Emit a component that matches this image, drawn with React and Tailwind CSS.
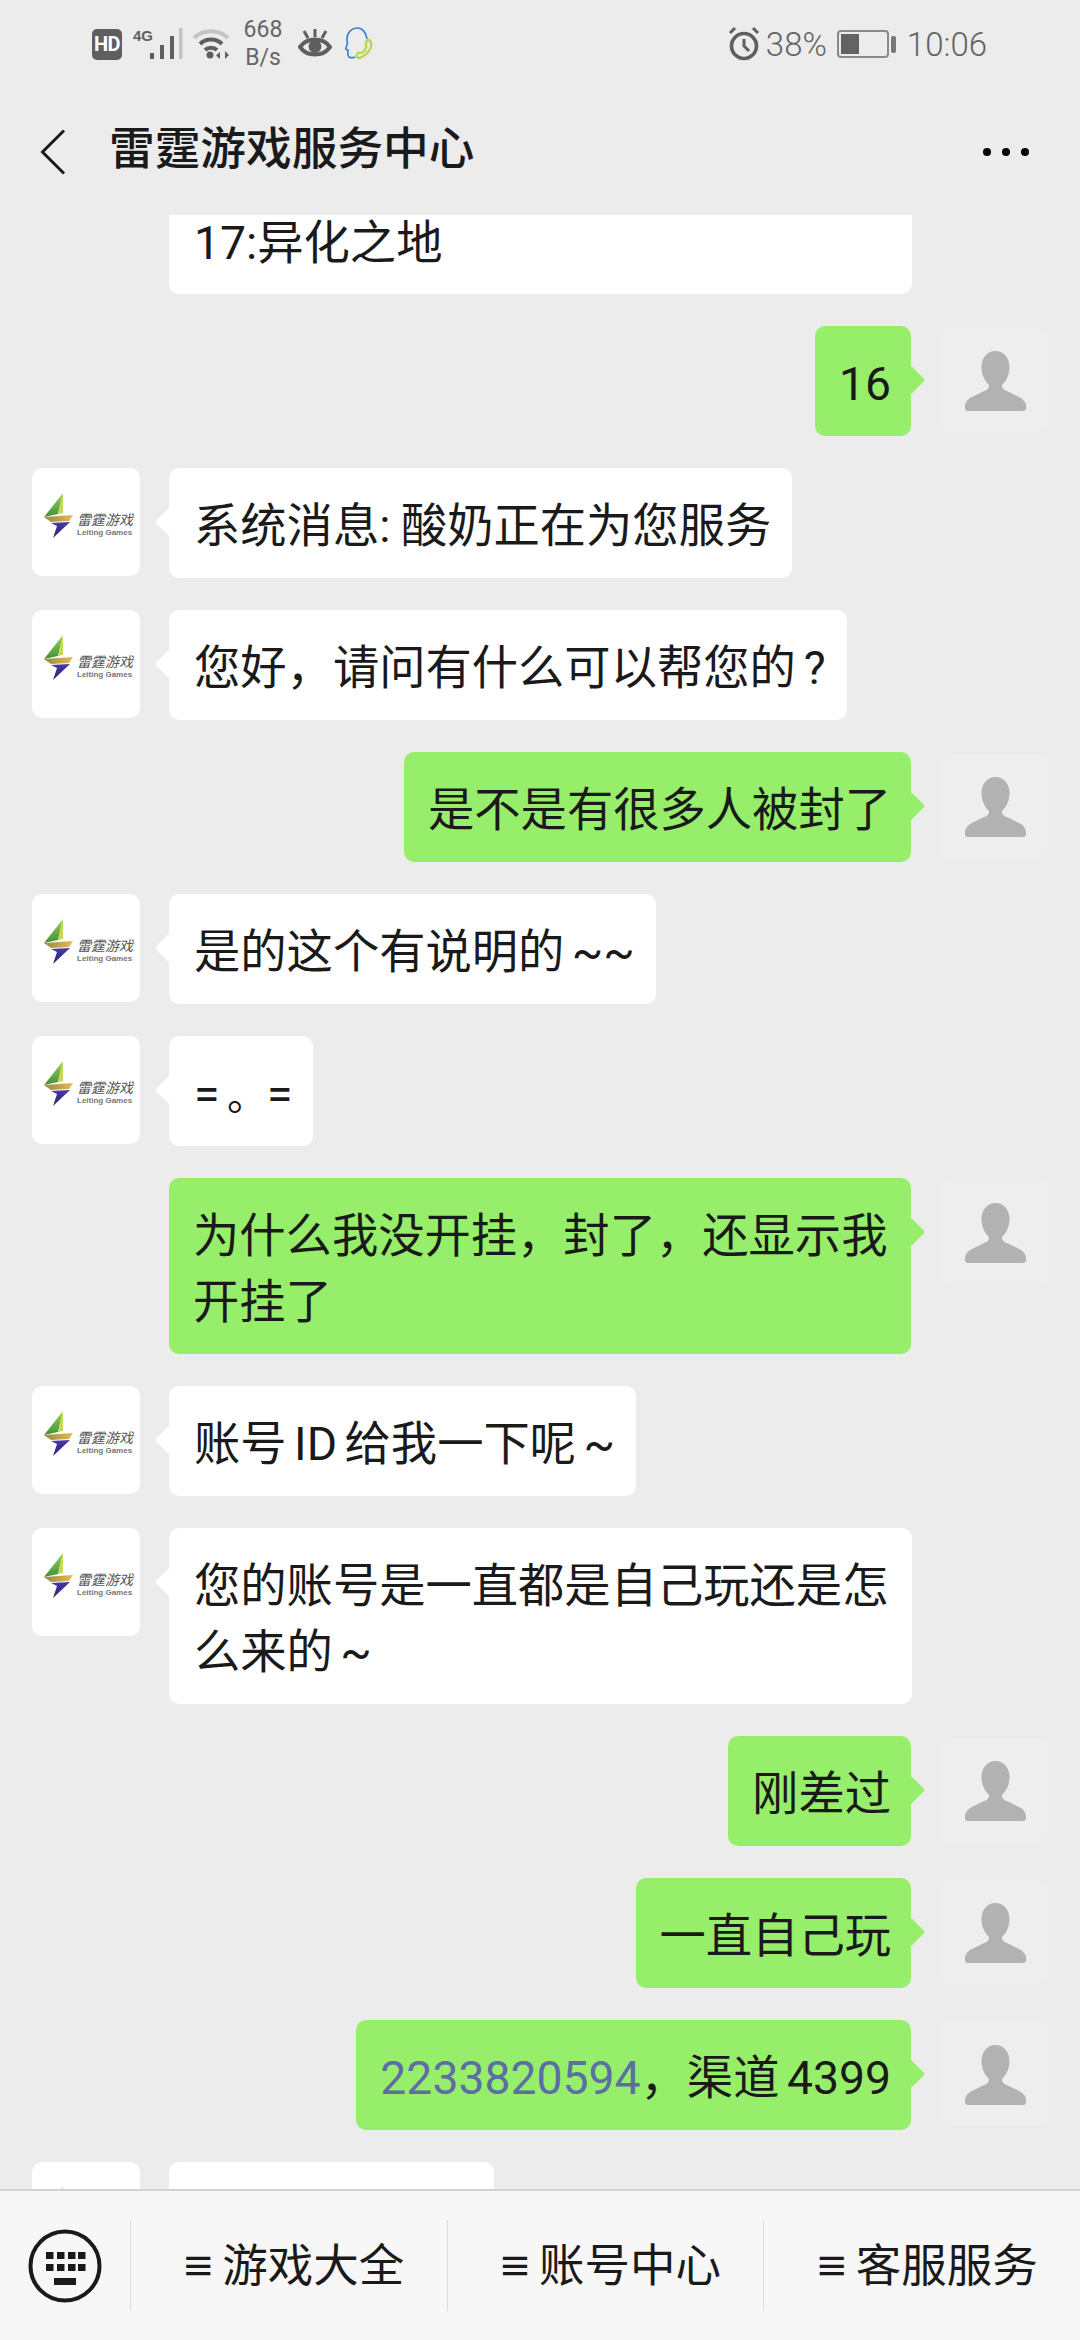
import React from 'react';

const LeitingLogo = ({ clipped }) => (
    <div className="relative w-[108px] h-[108px] shrink-0 rounded-[10px] bg-white overflow-hidden">
        <svg className="absolute left-0 top-0" width="46" height="80" viewBox="0 0 46 80">
            <defs>
                <linearGradient id="boltTop" x1="0" y1="0" x2="0" y2="1">
                    <stop offset="0" stopColor="#9ad64e" />
                    <stop offset="1" stopColor="#3f8f3c" />
                </linearGradient>
                <linearGradient id="boltMid" x1="0" y1="0" x2="1" y2="0">
                    <stop offset="0" stopColor="#8f8a48" />
                    <stop offset="1" stopColor="#efb850" />
                </linearGradient>
                <linearGradient id="boltLow" x1="0" y1="0" x2="0" y2="1">
                    <stop offset="0" stopColor="#4a37a8" />
                    <stop offset="1" stopColor="#262672" />
                </linearGradient>
            </defs>
            <path d="M31 25 L12 49 L26 46 Z" fill="url(#boltTop)" />
            <path d="M31 25 L26 46 L31 45 Z" fill="#c9d94f" />
            <path d="M12 49 L41 47 L37 53 L19 54 Z" fill="url(#boltMid)" />
            <path d="M19 55 L38 54 L21 70 L25 58 Z" fill="url(#boltLow)" />
        </svg>
        {!clipped && (
            <>
                <div className="absolute left-[45px] top-[43px] text-[14px] leading-[19px] italic text-[#555] whitespace-nowrap">
                    雷霆游戏
                </div>
                <div className="absolute left-[45px] top-[59px] text-[8px] leading-[11px] font-bold text-[#777] whitespace-nowrap font-['Liberation_Sans',sans-serif]">
                    Leiting Games
                </div>
            </>
        )}
    </div>
);

const UserAvatar = () => (
    <div className="w-[106px] h-[104px] mt-[2px] shrink-0 rounded-[8px] bg-[#eeeeee] flex items-center justify-center">
        <svg width="61" height="60" viewBox="0 0 61 60" className="mt-[2px]">
            <path
                d="M30.5 0C39 0 44.5 7 44.5 16C44.5 24 41 30 37 34C37 38 39 39 44 41L56 47C59 49 61 52 61 55L61 57Q61 60 58 60L3 60Q0 60 0 57L0 55C0 52 2 49 5 47L17 41C22 39 24 38 24 34C20 30 16.5 24 16.5 16C16.5 7 22 0 30.5 0Z"
                fill="#b2b2b2"
            />
        </svg>
    </div>
);

const Incoming = ({ children, width }) => (
    <div className="flex items-start gap-[29px] pl-[32px]">
        <LeitingLogo />
        <div className={`relative rounded-[10px] bg-white pl-[25px] pr-[21px] pt-[25px] pb-[19px] text-[46.3px] leading-[66px] [word-spacing:-4px] text-[#1a1a1a] ${width || ''}`}>
            <span className="absolute -left-[10px] top-[44px] w-[20px] h-[20px] rotate-45 rounded-[2px] bg-white" />
            <span className="relative">{children}</span>
        </div>
    </div>
);

const Outgoing = ({ children, width }) => (
    <div className="flex items-start justify-end gap-[31px] pr-[32px]">
        <div className={`relative rounded-[10px] bg-[#96ee6a] pl-[24px] pr-[20px] pt-[25px] pb-[19px] text-[46.3px] leading-[66px] [word-spacing:-4px] text-[#1a1a1a] ${width || ''}`}>
            <span className="absolute -right-[10px] top-[44px] w-[20px] h-[20px] rotate-45 rounded-[2px] bg-[#96ee6a]" />
            <span className="relative">{children}</span>
        </div>
        <UserAvatar />
    </div>
);

const StatusBar = () => (
    <div className="h-[88px] flex items-center justify-between pl-[92px] pr-[93px] text-[#636363]">
        <div className="flex items-center">
            <div className="w-[30px] h-[31px] rounded-[5px] bg-[#5f5f5f] text-white text-[20px] leading-[31px] font-bold text-center tracking-tight">
                HD
            </div>
            <div className="relative w-[50px] h-[32px] ml-[11px]">
                <span className="absolute left-0 top-0 text-[15px] leading-[15px] font-bold text-[#5f5f5f] font-['Liberation_Sans_Narrow','Liberation_Sans',sans-serif]">4G</span>
                <svg className="absolute left-0 top-0" width="50" height="32" viewBox="0 0 50 32">
                    <rect x="17" y="25" width="4" height="6" fill="#5f5f5f" />
                    <rect x="27" y="17" width="4" height="14" fill="#5f5f5f" />
                    <rect x="37" y="8" width="4" height="23" fill="#5f5f5f" />
                    <rect x="46" y="0" width="3.5" height="31" fill="#c4c4c4" />
                </svg>
            </div>
            <svg className="ml-[9px]" width="38" height="32" viewBox="0 0 38 32" fill="none">
                <path d="M2 10C11 1 27 1 36 10" stroke="#c4c4c4" strokeWidth="4" />
                <path d="M8 16C14 10 24 10 30 16" stroke="#5f5f5f" strokeWidth="4" />
                <path d="M13 22C16 19 22 19 25 22" stroke="#5f5f5f" strokeWidth="4" />
                <circle cx="18" cy="27" r="3.5" fill="#5f5f5f" />
                <path d="M28 24v7l-4-3.5zM33 23v8l4-4z" fill="#5f5f5f" />
            </svg>
            <div className="w-[40px] ml-[13px] text-center text-[23px] leading-[28px] text-[#666]">
                <div>668</div>
                <div>B/s</div>
            </div>
            <svg className="ml-[15px]" width="34" height="32" viewBox="0 0 34 32" fill="none">
                <path d="M2 19C9 9 25 9 32 19C25 29 9 29 2 19Z" stroke="#5f5f5f" strokeWidth="4" />
                <circle cx="17" cy="18.5" r="6.5" fill="#5f5f5f" />
                <path d="M17 1v8M6 3l4 7M28 3l-4 7" stroke="#5f5f5f" strokeWidth="3" />
            </svg>
            <svg className="ml-[13px]" width="29" height="34" viewBox="0 0 29 34" fill="none">
                <path d="M22 12C21 5 17 1 13 1C6 1 2 6 2 12C2 15 3 16 2 18L0.5 22L3 23C3 26 2 29 4 30C6 31 8 31 10 30" stroke="#2f7fd6" strokeWidth="1.6" />
                <path d="M24 13C27 15 27 20 24 24C21 28 16 31 13 31C11 30 11 28 13 26C15 25 17 27 18 25C20 23 22 20 21 18C20 16 22 13 24 13Z" stroke="#b9d84c" strokeWidth="2.4" />
            </svg>
        </div>
        <div className="flex items-center">
            <svg width="32" height="34" viewBox="0 0 32 34" fill="none">
                <circle cx="16" cy="19" r="12.5" stroke="#5f5f5f" strokeWidth="3.6" />
                <path d="M16 12v7l5 5" stroke="#5f5f5f" strokeWidth="3" />
                <path d="M2 6l5-5M30 6l-5-5" stroke="#5f5f5f" strokeWidth="3" />
            </svg>
            <span className="ml-[6px] text-[33px] leading-none font-light">38%</span>
            <div className="ml-[10px] w-[52px] h-[28px] rounded-[4px] border-2 border-[#8a8a8a] p-[2px]">
                <div className="w-[18px] h-full bg-[#636363]" />
            </div>
            <div className="ml-[2px] w-[5px] h-[17px] rounded-[2px] bg-[#777]" />
            <span className="ml-[11px] text-[33px] leading-none font-light">10:06</span>
        </div>
    </div>
);

const Header = () => (
    <div className="h-[127px] flex items-center justify-between pl-[40px] pr-[51px]">
        <div className="flex items-center">
            <svg width="26" height="46" viewBox="0 0 26 46" fill="none">
                <path d="M24 1.5L2.5 23L24 44.5" stroke="#1a1a1a" strokeWidth="3" />
            </svg>
            <span className="ml-[43px] -mt-[4px] text-[45.7px] leading-none font-medium text-[#1a1a1a]">雷霆游戏服务中心</span>
        </div>
        <div className="flex items-center gap-[11px]">
            <span className="w-[8px] h-[8px] rounded-full bg-black" />
            <span className="w-[8px] h-[8px] rounded-full bg-black" />
            <span className="w-[8px] h-[8px] rounded-full bg-black" />
        </div>
    </div>
);

const Keyboard = () => (
    <svg width="74" height="74" viewBox="0 0 74 74" fill="none">
        <circle cx="37" cy="37" r="34.5" stroke="#1a1a1a" strokeWidth="4" />
        {[18, 29, 40, 50].map((x) => (
            <g key={x} fill="#1a1a1a">
                <rect x={x} y="23" width="7.5" height="7" />
                <rect x={x} y="35" width="7.5" height="7" />
            </g>
        ))}
        <rect x="26" y="49" width="22" height="7" fill="#1a1a1a" />
    </svg>
);

const MenuItem = ({ label }) => (
    <div className="flex-1 h-[91px] border-l border-[#dcdcdc] flex items-center justify-center pl-[8px] pt-[3px] text-[45.5px] leading-none text-[#1a1a1a]">
        <span className="text-[34px] font-bold mr-[7px]">≡</span>
        <span>{label}</span>
    </div>
);

const BottomBar = () => (
    <div className="h-[151px] border-t-2 border-[#d2d2d2] bg-[#f7f7f7] flex items-center">
        <div className="w-[130px] flex justify-center">
            <Keyboard />
        </div>
        <MenuItem label="游戏大全" />
        <MenuItem label="账号中心" />
        <MenuItem label="客服服务" />
    </div>
);

export default function App() {
    return (
        <div className="w-[1080px] h-[2340px] flex flex-col bg-[#ececec] font-['Roboto','Noto_Sans_CJK_SC',sans-serif]">
            <StatusBar />
            <Header />
            <div className="flex-1 overflow-hidden flex flex-col gap-[32px]">
                <div className="pl-[169px]">
                    <div className="w-[743px] h-[79px] rounded-b-[10px] bg-white pl-[25px] pt-[4px] text-[46.3px] leading-[48px] text-[#1a1a1a]">
                        17:异化之地
                    </div>
                </div>
                <Outgoing>16</Outgoing>
                <Incoming><span className="[word-spacing:-1px]">系统消息: 酸奶正在为您服务</span></Incoming>
                <Incoming>您好，请问有什么可以帮您的<span className="ml-[8px]">?</span></Incoming>
                <Outgoing>是不是有很多人被封了</Outgoing>
                <Incoming>是的这个有说明的 ~~</Incoming>
                <Incoming>= <span className="text-[40px] leading-none">。</span>=</Incoming>
                <Outgoing width="w-[742px]">为什么我没开挂，封了，还显示我开挂了</Outgoing>
                <Incoming>账号 ID 给我一下呢 ~</Incoming>
                <Incoming width="w-[743px]">您的账号是一直都是自己玩还是怎么来的 ~</Incoming>
                <Outgoing>刚差过</Outgoing>
                <Outgoing>一直自己玩</Outgoing>
                <Outgoing>
                    <span className="text-[#5b6fa3]">2233820594</span>，渠道 4399
                </Outgoing>
                <div className="flex items-start gap-[29px] pl-[32px]">
                    <LeitingLogo clipped />
                    <div className="w-[325px] h-[110px] rounded-[10px] bg-white" />
                </div>
            </div>
            <BottomBar />
        </div>
    );
}
